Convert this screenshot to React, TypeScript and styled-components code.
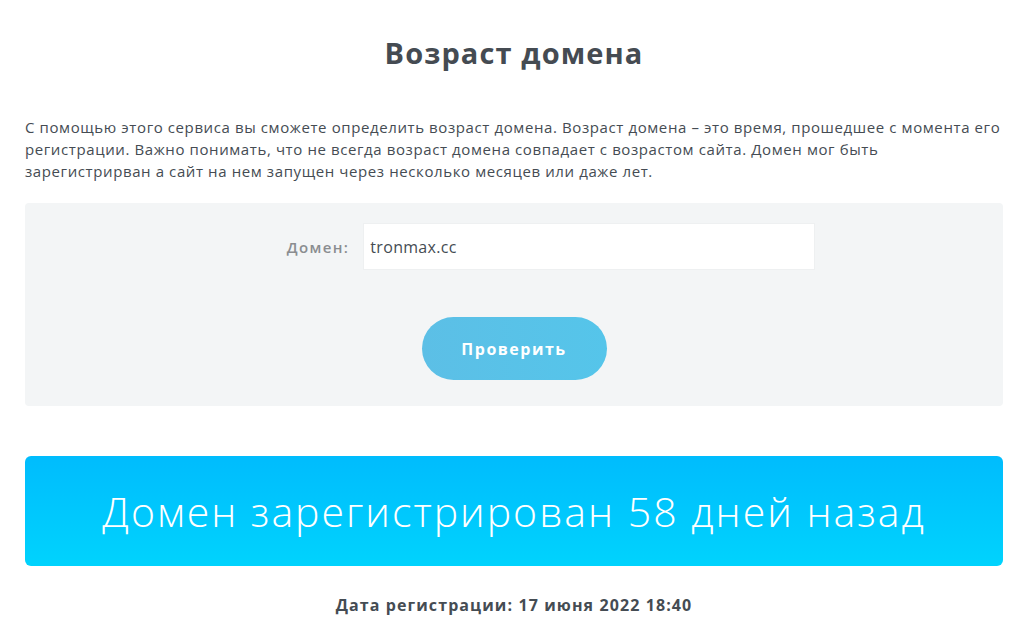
import React from "react";
import styled, { createGlobalStyle } from "styled-components";

const Global = createGlobalStyle`
  html, body { margin: 0; padding: 0; background: #ffffff; }
  body { font-family: "Open Sans", "Noto Sans", sans-serif; color: #454c53; }
  * { box-sizing: border-box; }
`;

const Page = styled.main`
  width: 978px;
  margin-left: 25px;
  display: flex;
  flex-direction: column;
`;

const Title = styled.h1`
  margin: 34px 0 0;
  text-align: center;
  font-size: 29px;
  font-weight: 700;
  line-height: 38px;
  color: #454b52;
  letter-spacing: 1.1px;
`;

const Intro = styled.p`
  margin: 44px 0 0;
  font-size: 15px;
  line-height: 22px;
  color: #454c53;
  letter-spacing: 0.6px;
`;

const FormPanel = styled.section`
  margin-top: 21px;
  background: #f3f5f6;
  border-radius: 4px;
  padding: 20px 0 26px;
  display: flex;
  flex-direction: column;
  align-items: center;
`;

const Field = styled.div`
  display: flex;
  align-items: center;
  gap: 14px;
  margin-left: 74px;
`;

const Label = styled.label`
  font-size: 15px;
  font-weight: 600;
  color: #8a8d90;
  letter-spacing: 1.4px;
`;

const Input = styled.input`
  width: 452px;
  height: 47px;
  border: 1px solid #eef0f1;
  background: #ffffff;
  padding: 0 6px;
  font-family: inherit;
  font-size: 16px;
  color: #454c53;
  letter-spacing: 0.3px;
  outline: none;
`;

const CheckButton = styled.button`
  margin-top: 47px;
  width: 185px;
  height: 63px;
  border: none;
  border-radius: 32px;
  background: linear-gradient(90deg, #5cbfe6 0%, #55c5ea 100%);
  color: #ffffff;
  font-family: inherit;
  font-size: 16px;
  font-weight: 700;
  letter-spacing: 1.5px;
  cursor: pointer;
`;

const ResultBanner = styled.div`
  margin-top: 50px;
  height: 110px;
  border-radius: 6px;
  background: linear-gradient(180deg, #00bcfd 0%, #00d3fd 100%);
  display: flex;
  align-items: center;
  justify-content: center;
  color: #ffffff;
  font-size: 41px;
  font-weight: 300;
  letter-spacing: 2px;
`;

const RegDate = styled.p`
  margin: 28px 0 0;
  text-align: center;
  font-size: 16px;
  font-weight: 700;
  color: #454c53;
  letter-spacing: 1.1px;
`;

export default function App() {
  return (
    <>
      <Global />
      <Page>
        <Title>Возраст домена</Title>
        <Intro>
          С помощью этого сервиса вы сможете определить возраст домена. Возраст домена – это время,
          прошедшее с момента его регистрации. Важно понимать, что не всегда возраст домена совпадает
          с возрастом сайта. Домен мог быть зарегистрирван а сайт на нем запущен через несколько
          месяцев или даже лет.
        </Intro>
        <FormPanel>
          <Field>
            <Label htmlFor="domain">Домен:</Label>
            <Input id="domain" defaultValue="tronmax.cc" />
          </Field>
          <CheckButton type="button">Проверить</CheckButton>
        </FormPanel>
        <ResultBanner>Домен зарегистрирован 58 дней назад</ResultBanner>
        <RegDate>Дата регистрации: 17 июня 2022 18:40</RegDate>
      </Page>
    </>
  );
}
